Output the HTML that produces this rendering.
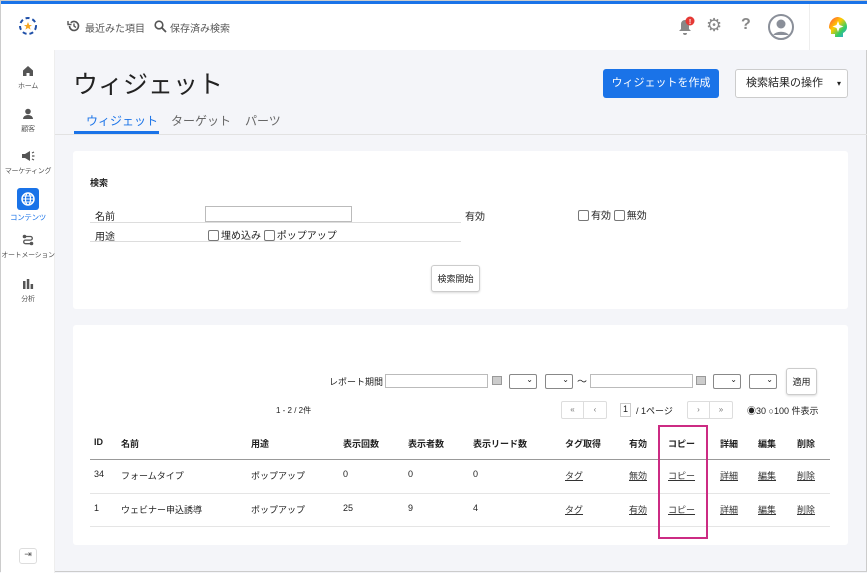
<!DOCTYPE html>
<html><head><meta charset="utf-8"><style>
*{box-sizing:border-box;margin:0;padding:0}
body{width:867px;height:572px;overflow:hidden;background:#f4f5f9;font-family:"Liberation Sans","Noto Sans CJK JP",sans-serif;color:#222;position:relative;border:1px solid #ccc}
.a{position:absolute}
.top{left:0;top:0;width:867px;height:3px;background:#1a73e8}
.hdr{left:0;top:3px;width:867px;height:46px;background:#fff}
.side{left:0;top:49px;width:54px;height:523px;background:#fff;border-right:1px solid #eee}
.si{width:54px;text-align:center;font-size:7px;color:#555;white-space:nowrap;letter-spacing:-0.3px}
.si svg{display:block;margin:0 auto 4px}
.panel{background:#fff;border-radius:3px}
.f10{font-size:10px}
.lnk{text-decoration:underline;color:#333}
.inp{border:1px solid #bbb;background:#fff;height:16px}
.cb{display:inline-block;width:11px;height:11px;border:1px solid #777;border-radius:2px;vertical-align:-2px;margin-right:2px}
.sel{border:1px solid #888;border-radius:2px;height:15px;background:#fff;font-size:8px;text-align:right;padding-right:3px}
.btn{border:1px solid #ccc;border-radius:3px;background:#fff;box-shadow:0 1px 2px rgba(0,0,0,.15);font-size:9px;text-align:center}
</style></head><body>
<div class="a top"></div>
<div class="a hdr">
 <svg class="a" style="left:15px;top:10px" width="24" height="24" viewBox="0 0 24 24"><circle cx="12" cy="12" r="8" fill="none" stroke="#1e4fa8" stroke-width="2" stroke-dasharray="4 3"/><polygon points="12,8 13.2,11 16,11 13.7,12.8 14.6,15.6 12,14 9.4,15.6 10.3,12.8 8,11 10.8,11" fill="#f5a623"/></svg>
 <svg class="a" style="left:66px;top:15px" width="14" height="14" viewBox="0 0 14 14"><path d="M2.5 7a4.5 4.5 0 1 0 1.3-3.2" fill="none" stroke="#555" stroke-width="1.6"/><path d="M1 2v3.5h3.5" fill="none" stroke="#555" stroke-width="1.4"/><path d="M7 4.5V7l2 1.5" fill="none" stroke="#555" stroke-width="1.4"/></svg>
 <div class="a" style="left:84px;top:16px;font-size:10px;color:#555">最近みた項目</div>
 <svg class="a" style="left:152px;top:15px" width="14" height="14" viewBox="0 0 14 14"><circle cx="6" cy="6" r="3.8" fill="none" stroke="#555" stroke-width="1.6"/><path d="M8.8 8.8L13 13" stroke="#555" stroke-width="1.8"/></svg>
 <div class="a" style="left:169px;top:16px;font-size:10px;color:#555">保存済み検索</div>
 <svg class="a" style="left:676px;top:12px" width="18" height="20"><path d="M8 4a4 4 0 0 0-4 4v5l-2 2h12l-2-2V8a4 4 0 0 0-4-4zM6 17h4a2 2 0 0 1-4 0z" fill="#888"/><circle cx="13" cy="5" r="4.5" fill="#e53935"/><text x="13" y="8" font-size="7" font-weight="bold" fill="#fff" text-anchor="middle" font-family="Liberation Sans">!</text></svg>
 <div class="a" style="left:705px;top:11px;font-size:18px;color:#888">⚙</div>
 <div class="a" style="left:740px;top:12px;font-size:16px;color:#888;font-weight:bold">?</div>
 <svg class="a" style="left:767px;top:10px" width="26" height="26"><circle cx="13" cy="13" r="12" fill="#fff" stroke="#8a8f99" stroke-width="2"/><circle cx="13" cy="10" r="4.5" fill="#8a8f99"/><path d="M5 21a9 6 0 0 1 16 0z" fill="#8a8f99"/></svg>
 <div class="a" style="left:808px;top:0;width:1px;height:46px;background:#eee"></div>
 <svg class="a" style="left:826px;top:12px" width="22" height="22"><defs><linearGradient id="g" x1="0" y1="0" x2="1" y2="1"><stop offset="0" stop-color="#f44"/><stop offset=".4" stop-color="#fc0"/><stop offset=".7" stop-color="#3c6"/><stop offset="1" stop-color="#39f"/></linearGradient></defs><path d="M11 1a10 10 0 0 1 9 10c0 3-2 5-4 6v4H8v-3H4v-4L2 12C2 6 6 1 11 1z" fill="url(#g)"/><path d="M11 5l1.5 4 4 1.5-4 1.5L11 16l-1.5-4-4-1.5 4-1.5z" fill="#fff"/></svg>
</div>
<div class="a side">
 <div class="a si" style="top:15px"><svg width="12" height="12" viewBox="0 0 12 12"><path d="M6 1L1 5.5V11h3.5V8h3v3H11V5.5z" fill="#555"/></svg>ホーム</div>
 <div class="a si" style="top:58px"><svg width="12" height="12" viewBox="0 0 12 12"><circle cx="6" cy="3.5" r="2.8" fill="#555"/><path d="M1 11a5 4 0 0 1 10 0z" fill="#555"/></svg>顧客</div>
 <div class="a si" style="top:100px"><svg width="14" height="12" viewBox="0 0 14 12"><path d="M1 4h3l5-3v10L4 8H1z" fill="#555"/><path d="M11 3l2-1M11 6h2.5M11 9l2 1" stroke="#555" stroke-width="1.2"/></svg>マーケティング</div>
 <div class="a" style="left:16px;top:138px;width:22px;height:22px;background:#1a73e8;border-radius:3px"><svg width="22" height="22" viewBox="0 0 22 22"><circle cx="11" cy="11" r="6" fill="none" stroke="#fff" stroke-width="1.5"/><ellipse cx="11" cy="11" rx="2.5" ry="6" fill="none" stroke="#fff" stroke-width="1.2"/><path d="M5 11h12M6 8h10M6 14h10" stroke="#fff" stroke-width="1"/></svg></div>
 <div class="a si" style="top:162px;color:#1a73e8;font-size:7.5px">コンテンツ</div>
 <div class="a si" style="top:184px"><svg width="12" height="12" viewBox="0 0 12 12"><circle cx="2.5" cy="2.5" r="1.8" fill="#555"/><circle cx="9.5" cy="9.5" r="1.8" fill="#555"/><path d="M2.5 2.5h6a1.8 1.8 0 0 1 0 3.6h-5a1.8 1.8 0 0 0 0 3.6h6" fill="none" stroke="#555" stroke-width="1.3"/></svg>オートメーション</div>
 <div class="a si" style="top:228px"><svg width="12" height="12" viewBox="0 0 12 12"><rect x="1" y="3" width="2.5" height="8" fill="#555"/><rect x="4.8" y="1" width="2.5" height="10" fill="#555"/><rect x="8.6" y="6" width="2.5" height="5" fill="#555"/></svg>分析</div>
 <div class="a" style="left:18px;top:498px;width:18px;height:16px;border:1px solid #ddd;border-radius:3px;font-size:9px;text-align:center;color:#555">⇥</div>
</div>
<div class="a" style="left:72px;top:64px;font-size:25px;color:#222">ウィジェット</div>
<div class="a" style="left:602px;top:68px;width:116px;height:29px;background:#1a73e8;border-radius:3px;color:#fff;font-size:11px;text-align:center;line-height:29px">ウィジェットを作成</div>
<div class="a" style="left:734px;top:68px;width:113px;height:29px;background:#fff;border:1px solid #ccc;border-radius:3px;font-size:11px;line-height:27px;padding-left:10px">検索結果の操作 <span style="float:right;margin-right:6px;font-size:8px">▾</span></div>
<div class="a" style="left:85px;top:111px;font-size:12px;color:#1a73e8">ウィジェット</div>
<div class="a" style="left:73px;top:130px;width:85px;height:3px;background:#1a73e8"></div>
<div class="a" style="left:170px;top:111px;font-size:12px;color:#666">ターゲット</div>
<div class="a" style="left:244px;top:111px;font-size:12px;color:#666">パーツ</div>
<div class="a" style="left:54px;top:133px;width:813px;height:1px;background:#e2e2e2"></div>

<div class="a panel" style="left:72px;top:150px;width:775px;height:158px">
 <div class="a" style="left:17px;top:25px;font-size:9px;font-weight:bold">検索</div>
 <div class="a f10" style="left:22px;top:57px">名前</div>
 <div class="a inp" style="left:132px;top:55px;width:147px"></div>
 <div class="a" style="left:17px;top:71px;width:371px;height:1px;background:#ddd"></div>
 <div class="a f10" style="left:22px;top:77px">用途</div>
 <div class="a f10" style="left:135px;top:76px"><span class="cb"></span>埋め込み <span class="cb"></span>ポップアップ</div>
 <div class="a" style="left:17px;top:90px;width:371px;height:1px;background:#ddd"></div>
 <div class="a f10" style="left:392px;top:57px">有効</div>
 <div class="a f10" style="left:505px;top:56px"><span class="cb"></span>有効 <span class="cb"></span>無効</div>
 <div class="a btn" style="left:358px;top:114px;width:49px;height:27px;line-height:26px">検索開始</div>
</div>

<div class="a panel" style="left:72px;top:324px;width:775px;height:220px">
 <div class="a" style="left:256px;top:50px;font-size:9px">レポート期間</div>
 <div class="a inp" style="left:312px;top:49px;width:103px;height:14px"></div>
 <div class="a" style="left:419px;top:51px;width:10px;height:9px;background:#ccc;border:1px solid #999"></div>
 <div class="a sel" style="left:436px;top:49px;width:28px">⌄</div>
 <div class="a sel" style="left:472px;top:49px;width:28px">⌄</div>
 <div class="a" style="left:504px;top:48px;font-size:10px">〜</div>
 <div class="a inp" style="left:517px;top:49px;width:103px;height:14px"></div>
 <div class="a" style="left:623px;top:51px;width:10px;height:9px;background:#ccc;border:1px solid #999"></div>
 <div class="a sel" style="left:640px;top:49px;width:28px">⌄</div>
 <div class="a sel" style="left:676px;top:49px;width:28px">⌄</div>
 <div class="a btn" style="left:713px;top:43px;width:31px;height:27px;line-height:26px">適用</div>
 <div class="a" style="left:203px;top:80px;font-size:8px">1 - 2 / 2件</div>
 <div class="a" style="left:488px;top:76px;width:46px;height:18px;border:1px solid #ddd;border-radius:2px;font-size:8px;color:#777;line-height:16px"><span style="display:inline-block;width:22px;text-align:center;border-right:1px solid #ddd">«</span><span style="display:inline-block;width:22px;text-align:center">‹</span></div>
 <div class="a" style="left:547px;top:78px;width:11px;height:14px;border:1px solid #ccc;font-size:9px;text-align:center">1</div>
 <div class="a" style="left:563px;top:79px;font-size:9px">/ 1ページ</div>
 <div class="a" style="left:614px;top:76px;width:46px;height:18px;border:1px solid #ddd;border-radius:2px;font-size:8px;color:#777;line-height:16px"><span style="display:inline-block;width:22px;text-align:center;border-right:1px solid #ddd">›</span><span style="display:inline-block;width:22px;text-align:center">»</span></div>
 <div class="a" style="left:674px;top:79px;font-size:9px">◉30 ○100 件表示</div>
 <div class="a" style="left:17px;top:134px;width:740px;height:1px;background:#999"></div>
 <div class="a" style="left:17px;top:168px;width:740px;height:1px;background:#e5e5e5"></div>
 <div class="a" style="left:17px;top:201px;width:740px;height:1px;background:#e5e5e5"></div>
 <div class="a" style="left:21px;top:112px;font-size:9px;font-weight:bold;width:740px">
  <span class="a" style="left:0">ID</span><span class="a" style="left:27px">名前</span><span class="a" style="left:157px">用途</span><span class="a" style="left:249px">表示回数</span><span class="a" style="left:314px">表示者数</span><span class="a" style="left:379px">表示リード数</span><span class="a" style="left:471px">タグ取得</span><span class="a" style="left:535px">有効</span><span class="a" style="left:574px">コピー</span><span class="a" style="left:626px">詳細</span><span class="a" style="left:664px">編集</span><span class="a" style="left:703px">削除</span>
 </div>
 <div class="a" style="left:21px;top:144px;font-size:9px;width:740px">
  <span class="a" style="left:0">34</span><span class="a" style="left:27px">フォームタイプ</span><span class="a" style="left:157px">ポップアップ</span><span class="a" style="left:249px">0</span><span class="a" style="left:314px">0</span><span class="a" style="left:379px">0</span><span class="a lnk" style="left:471px">タグ</span><span class="a lnk" style="left:535px">無効</span><span class="a lnk" style="left:574px">コピー</span><span class="a lnk" style="left:626px">詳細</span><span class="a lnk" style="left:664px">編集</span><span class="a lnk" style="left:703px">削除</span>
 </div>
 <div class="a" style="left:21px;top:178px;font-size:9px;width:740px">
  <span class="a" style="left:0">1</span><span class="a" style="left:27px">ウェビナー申込誘導</span><span class="a" style="left:157px">ポップアップ</span><span class="a" style="left:249px">25</span><span class="a" style="left:314px">9</span><span class="a" style="left:379px">4</span><span class="a lnk" style="left:471px">タグ</span><span class="a lnk" style="left:535px">有効</span><span class="a lnk" style="left:574px">コピー</span><span class="a lnk" style="left:626px">詳細</span><span class="a lnk" style="left:664px">編集</span><span class="a lnk" style="left:703px">削除</span>
 </div>
</div>
<div class="a" style="left:657px;top:424px;width:50px;height:114px;border:2px solid #cc2b83"></div>
</body></html>
